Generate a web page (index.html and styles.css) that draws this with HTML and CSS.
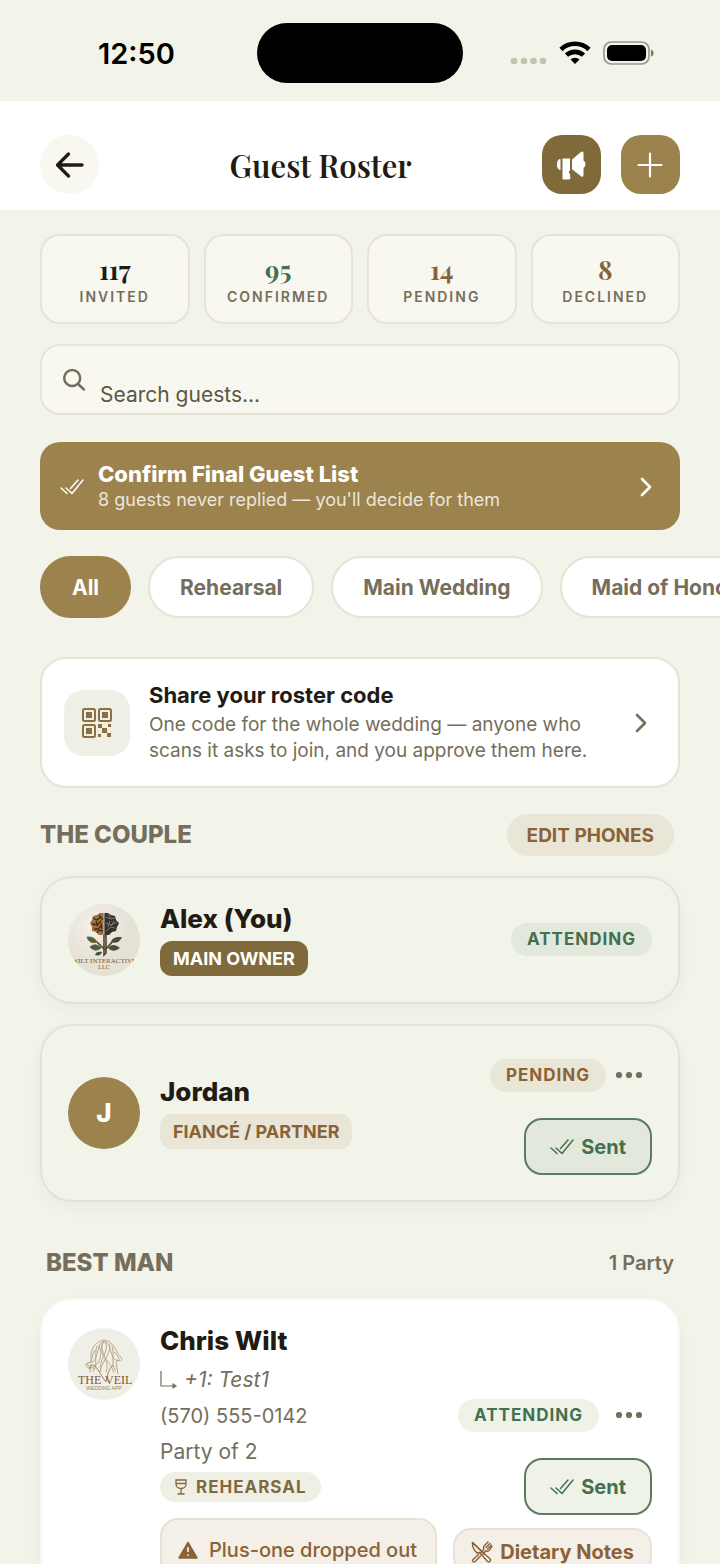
FILE: index.html
```html
<!DOCTYPE html>
<html lang="en">
<head>
    <meta charset="UTF-8">
    <meta name="viewport" content="width=device-width, initial-scale=1.0">
    <title>Guest Roster</title>
    <link rel="stylesheet" href="styles.css">
</head>
<body>
    <!-- Shared icons -->
    <svg class="sprite" aria-hidden="true">
        <symbol id="icon-checks" viewBox="0 0 24 16">
            <path d="M1 9l6 5.500M6 9l6 5.500L23 1M10.500 9.500L18 1" fill="none" stroke="currentColor" stroke-width="1.500" stroke-linecap="round" stroke-linejoin="round"/>
        </symbol>
        <symbol id="icon-chevron" viewBox="0 0 12 20">
            <path d="M2 2l8 8-8 8" fill="none" stroke="currentColor" stroke-width="2.600" stroke-linecap="round" stroke-linejoin="round"/>
        </symbol>
        <symbol id="icon-dots" viewBox="0 0 28 8">
            <g fill="currentColor"><circle cx="4" cy="4" r="3.100"/><circle cx="14" cy="4" r="3.100"/><circle cx="24" cy="4" r="3.100"/></g>
        </symbol>
    </svg>

    <div class="screen">
        <div class="status-bar">
            <div class="status-time">12:50</div>
            <div class="island"></div>
            <div class="status-icons">
                <svg width="37" height="8" viewBox="0 0 37 8">
                    <g fill="#c5c0b0"><circle cx="4" cy="4" r="3.300"/><circle cx="14" cy="4" r="3.300"/><circle cx="23.500" cy="4" r="3.300"/><circle cx="33" cy="4" r="3.300"/></g>
                </svg>
                <svg width="32" height="24" viewBox="0 0 32 24">
                    <g fill="none" stroke="#000" stroke-width="4.600">
                        <path d="M2 8.500a20 20 0 0 1 28 0"/>
                        <path d="M7.500 14.200a12.400 12.400 0 0 1 17 0"/>
                    </g>
                    <path d="M11.500 18.500a6.500 6.500 0 0 1 9 0L16 23z"/>
                </svg>
                <svg width="51" height="24" viewBox="0 0 51 24">
                    <rect x="1" y="1" width="45" height="22" rx="7.500" fill="none" stroke="#9b988a" stroke-width="1.700"/>
                    <rect x="4" y="4" width="39" height="16" rx="5"/>
                    <path d="M48 8.500c3.500 1 3.500 6 0 7z" fill="#7c796c"/>
                </svg>
            </div>
        </div>

        <header class="header">
            <button class="back-btn" aria-label="Back">
                <svg width="30" height="28" viewBox="0 0 30 28"><path d="M13.500 3L2.500 14l11 11M3 14h24" fill="none" stroke="currentColor" stroke-width="3.300" stroke-linecap="round" stroke-linejoin="round"/></svg>
            </button>
            <h1>Guest Roster</h1>
            <div class="header-actions">
                <button class="square-btn dark" aria-label="Announce">
                    <svg width="30" height="30" viewBox="0 0 30 30">
                        <g fill="#fff">
                            <path d="M4.500 9C-.3 9-.3 20 4.500 20z"/>
                            <path d="M6.500 8.500H14v12.200c-1.500.5-1.600 1.600-.5 2.500.7 1 .5 2 .7 3.200.5 1.600 0 3.100-1.600 3.100H8c-1 0-1.500-.5-1.500-1.500z"/>
                            <path d="M16 9.500l9-7.500c1.500-1 2.500-.5 2.500 1.200v7.300c2.600 1.500 2.600 6 0 7.500V25c0 1.700-1 2.200-2.500 1.200l-9-7z"/>
                        </g>
                    </svg>
                </button>
                <button class="square-btn" aria-label="Add guest">
                    <svg width="26" height="26" viewBox="0 0 26 26"><path d="M13 1.500v23M1.500 13h23" fill="none" stroke="#fff" stroke-width="2.200" stroke-linecap="round"/></svg>
                </button>
            </div>
        </header>

        <main class="content">
            <div class="stats">
                <div class="stat"><b>117</b><span>INVITED</span></div>
                <div class="stat confirmed"><b>95</b><span>CONFIRMED</span></div>
                <div class="stat pending"><b>14</b><span>PENDING</span></div>
                <div class="stat pending"><b>8</b><span>DECLINED</span></div>
            </div>

            <label class="search">
                <svg width="24" height="24" viewBox="0 0 24 24"><path d="M16.500 16.500l5.500 5M18.200 10a8 8 0 1 1-16 0a8 8 0 1 1 16 0z" fill="none" stroke="currentColor" stroke-width="2.500" stroke-linecap="round"/></svg>
                <input type="text" placeholder="Search guests..." aria-label="Search guests">
            </label>

            <button class="banner">
                <svg width="24" height="16"><use href="#icon-checks"/></svg>
                <span class="banner-text">
                    <strong>Confirm Final Guest List</strong>
                    <span>8 guests never replied — you'll decide for them</span>
                </span>
                <svg width="12" height="20"><use href="#icon-chevron"/></svg>
            </button>

            <div class="chips">
                <button class="chip active">All</button>
                <button class="chip">Rehearsal</button>
                <button class="chip">Main Wedding</button>
                <button class="chip">Maid of Honor</button>
            </div>

            <button class="share">
                <span class="share-icon">
                    <svg width="30" height="30" viewBox="0 0 30 30">
                        <g fill="none" stroke="#8c7040" stroke-width="2">
                            <rect x="1" y="1" width="12" height="12" rx="1.500"/>
                            <rect x="17" y="1" width="12" height="12" rx="1.500"/>
                            <rect x="1" y="17" width="12" height="12" rx="1.500"/>
                        </g>
                        <g fill="#8c7040">
                            <path d="M4 4h6v6H4zM20 4h6v6h-6zM4 20h6v6H4z"/>
                            <path d="M16 16h4v4h-4zM26 16h3v3h-3zM20 20h5v5h-5zM16 26h3v3h-3zM25 25h4v4h-4z"/>
                        </g>
                    </svg>
                </span>
                <span class="share-text">
                    <strong>Share your roster code</strong>
                    <span>One code for the whole wedding — anyone who scans it asks to join, and you approve them here.</span>
                </span>
                <svg width="12" height="20"><use href="#icon-chevron"/></svg>
            </button>

            <!-- The couple -->
            <div class="section-head">
                <h2>THE COUPLE</h2>
                <button class="edit-btn">EDIT PHONES</button>
            </div>

            <article class="card">
                <svg class="avatar" viewBox="0 0 72 72" role="img" aria-label="Wilt Interactive LLC">
                    <defs>
                        <radialGradient id="pearl" cx="35%" cy="30%"><stop offset="0" stop-color="#f4f0e9"/><stop offset="1" stop-color="#e5e1d5"/></radialGradient>
                        <clipPath id="round"><circle cx="36" cy="36" r="36"/></clipPath>
                    </defs>
                    <g clip-path="url(#round)">
                        <rect width="72" height="72" fill="url(#pearl)"/>
                        <path d="M36 9l-4 0-3 2-4 1-1 4-2 3 2 4 0 4 4 1 3 3 5 0z" fill="#a0713a"/>
                        <path d="M36 9l4 0 3 2 4 1 1 4 3 3-2 4-1 4-4 1-3 3-5 0z" fill="#35312d"/>
                        <path d="M25 14l4 2 4-3 2 3M24 20l5 1 4-4M26 25l4 0 4-4M29 29l2-3 4 1M31 11l2 3M28 17l2 5M33 19l1 6" fill="none" stroke="#3f2c18" stroke-width="1.300"/>
                        <path d="M38 13l5 2 4-1M38 19l5 2 6-3M38 27l5-4 4 1M40 10l3 4M42 17l-2 6M46 17l-3 5" fill="none" stroke="#89837a" stroke-width=".9"/>
                        <path d="M36 8v23" stroke="#e8e0cf" stroke-width=".8"/>
                        <path d="M36 31v20l2-2V31M36 45l-7-7M37 46l8-9" fill="none" stroke="#4d402f" stroke-width="1.600"/>
                        <path d="M29 38c-2-4-5-5-10-5 1 4 5 7 10 5zM33 44c-4-4-7-4-11-1 4 4 7 4 11 1z" fill="#39664f" stroke="#8b602f"/>
                        <path d="M43 38c2-5 5-5 11-5-2 5-6 7-11 5zM40 44c3-4 7-4 12 0-4 3-8 4-12 0zM34 48c-4-1-6 0-7 3 4 1 6 0 7-3z" fill="#4d4a43"/>
                        <text x="36" y="59" text-anchor="middle" class="logo-text" font-size="7">WILT INTERACTIVE</text>
                        <text x="36" y="65" text-anchor="middle" class="logo-text" font-size="6">LLC</text>
                    </g>
                </svg>
                <div class="info">
                    <h3>Alex (You)</h3>
                    <span class="role owner">MAIN OWNER</span>
                </div>
                <div class="actions">
                    <span class="pill attending">ATTENDING</span>
                </div>
            </article>

            <article class="card">
                <div class="avatar initial">J</div>
                <div class="info">
                    <h3>Jordan</h3>
                    <span class="role">FIANCÉ / PARTNER</span>
                </div>
                <div class="actions">
                    <div class="status-row">
                        <span class="pill">PENDING</span>
                        <button class="more-btn" aria-label="More options"><svg width="28" height="8"><use href="#icon-dots"/></svg></button>
                    </div>
                    <button class="sent-btn"><svg width="24" height="16"><use href="#icon-checks"/></svg>Sent</button>
                </div>
            </article>

            <!-- Best man -->
            <div class="section-head party-head">
                <h2>BEST MAN</h2>
                <span class="count">1 Party</span>
            </div>

            <article class="card party">
                <svg class="avatar" viewBox="0 0 72 72" role="img" aria-label="The Veil Wedding App">
                    <circle cx="36" cy="36" r="36" fill="#f0efe7"/>
                    <g fill="none" stroke="#b9a98c" stroke-width="1">
                        <path d="M24 34c-3-7 0-20 12-22 12 2 12 15 17 17 3 4-3 5-7 2-4-5-3-16-10-18-7 2-5 13-10 20-4 3-9 1-8 4 0 4 8 4 12-2 5-7 1-17 6-21"/>
                        <path d="M27 22c-4 5-2 12-7 13M29 18c-3 9 1 20-4 26M44 18c3 9-2 17 4 25M42 16c0 13-8 16-10 28M31 17c2 13 12 16 15 28M35 14c-5 8 8 21 3 30M37 14c6 8-8 19-4 30M46 24c5 4 7 10 2 9M18 36l8 5M48 34l2 12M23 36l-1 8"/>
                    </g>
                    <path d="M21 41c5-11 9 3 17 13 1-7 3-13 7-17" fill="none" stroke="#a0804b"/>
                    <text x="10" y="56" class="logo-text" font-size="12">THE</text>
                    <text x="37" y="56" class="logo-text" font-size="12">VEIL</text>
                    <text x="36" y="62" text-anchor="middle" class="logo-small" font-size="5">WEDDING APP</text>
                </svg>
                <div class="info">
                    <h3>Chris Wilt</h3>
                    <p class="plus-one">
                        <svg width="18" height="20" viewBox="0 0 18 20"><path d="M1 1v15h14M13 14l3 2-3 2z" fill="none" stroke="currentColor" stroke-width="1.200"/></svg>
                        <em>+1: Test1</em>
                    </p>
                    <p class="phone">(570) 555-0142</p>
                    <p class="party-size">Party of 2</p>
                    <span class="event">
                        <svg width="14" height="16" viewBox="0 0 14 16"><path d="M2 1h10v4a5 4.500 0 0 1-10 0zM2 4.500h10M7 9.500V15M3.500 15h7" fill="none" stroke="currentColor" stroke-width="1.300"/></svg>
                        REHEARSAL
                    </span>
                    <div class="warning">
                        <svg width="20" height="18" viewBox="0 0 20 18"><path d="M10 1.500L19 17H1z" fill="currentColor" stroke="currentColor" stroke-width="1.500" stroke-linejoin="round"/><path d="M10 6v5M10 13.500v1.600" stroke="#f4efe7" stroke-width="1.700"/></svg>
                        Plus-one dropped out
                    </div>
                </div>
                <div class="actions">
                    <div class="status-row">
                        <span class="pill attending">ATTENDING</span>
                        <button class="more-btn" aria-label="More options"><svg width="28" height="8"><use href="#icon-dots"/></svg></button>
                    </div>
                    <button class="sent-btn"><svg width="24" height="16"><use href="#icon-checks"/></svg>Sent</button>
                    <button class="diet-btn">
                        <svg width="22" height="22" viewBox="0 0 22 22">
                            <g fill="none" stroke="currentColor" stroke-width="1.400" stroke-linecap="round" stroke-linejoin="round">
                                <path d="M1.500 1.500C1 6 3 9 6 12l2.500-.5 8 9c2 1.300 4-1 2.500-2.700L13.500 13z"/>
                                <path d="M1.500 1.500L12 11.500M17 1l-4 4c-1 1.500-.5 2.500 0 3.500L9.500 12M7.500 13.500L2 18.500c-1.300 1.500.5 3.500 2.200 2L9.500 15M12 13.500L14.500 10c1.500.5 2.500.5 3.500-.5L21 5.500M19 2.500L15 6.500M20.300 4L16.500 8"/>
                            </g>
                        </svg>
                        Dietary Notes
                    </button>
                </div>
            </article>
        </main>
    </div>
</body>
</html>
```
FILE: styles.css
```css
* {
    box-sizing: border-box;
}

body {
    font-family: Inter, "Liberation Sans", sans-serif;
    background-color: #f2f3e9;
    color: #211b14;
    margin: 0;
}

h1,
h2,
h3,
p {
    margin: 0;
}

button {
    font-family: inherit;
    color: inherit;
    border: none;
    padding: 0;
    cursor: pointer;
    white-space: nowrap;
}

svg {
    flex-shrink: 0;
}

.sprite {
    display: none;
}

.screen {
    height: 100vh;
    display: flex;
    flex-direction: column;
    overflow: hidden;
}

/* Status bar */
.status-bar {
    flex-shrink: 0;
    height: 101px;
    padding: 5px 66px 0;
    display: grid;
    grid-template-columns: 1fr 206px 1fr;
    align-items: center;
    color: #000;
}

.status-time {
    padding-left: 32px;
    font-size: 29px;
    font-weight: 600;
}

.island {
    height: 60px;
    border-radius: 30px;
    background-color: #000;
}

.status-icons {
    display: flex;
    justify-content: flex-end;
    align-items: center;
    gap: 12px;
}

.status-icons svg:first-child {
    margin-top: 16px;
}

/* Header */
.header {
    flex-shrink: 0;
    background-color: #fff;
    padding: 34px 40px 16px;
    display: flex;
    justify-content: space-between;
    align-items: center;
}

.header h1 {
    font-family: "Playfair Display", "Liberation Serif", serif;
    font-size: 31px;
    line-height: 40px;
    font-weight: 600;
}

.header-actions {
    display: flex;
    gap: 20px;
}

.back-btn,
.square-btn {
    width: 59px;
    height: 59px;
    display: flex;
    align-items: center;
    justify-content: center;
}

.back-btn {
    border-radius: 50%;
    background-color: #f8f8f0;
}

.square-btn {
    border-radius: 20px;
    background-color: #9c824c;
}

.square-btn.dark {
    background-color: #80693b;
}

.content {
    flex: 1;
    min-height: 0;
    overflow: hidden auto;
    scrollbar-width: none;
    padding: 24px 40px;
}

/* Counters */
.stats {
    display: grid;
    grid-template-columns: repeat(4, 1fr);
    gap: 14px;
    margin-bottom: 20px;
}

.stat {
    height: 90px;
    padding-top: 6px;
    border: 2px solid #e7e3d5;
    border-radius: 20px;
    background-color: #f8f8f0;
    display: flex;
    flex-direction: column;
    align-items: center;
    justify-content: center;
}

.stat b {
    font-family: "Playfair Display", "Liberation Serif", serif;
    font-size: 26px;
    line-height: 30px;
}

.stat span {
    font-size: 14px;
    line-height: 24px;
    font-weight: 600;
    letter-spacing: 2px;
    color: #756e5c;
}

.stat.confirmed b {
    color: #43704f;
}

.stat.pending b {
    color: #8b6235;
}

/* Search */
.search {
    height: 71px;
    padding: 0 20px;
    border: 2px solid #e7e3d5;
    border-radius: 20px;
    background-color: #f8f8f0;
    display: flex;
    align-items: center;
    gap: 14px;
    color: #756e5c;
}

.search input {
    flex: 1;
    border: none;
    outline: none;
    background: none;
    padding: 30px 0 0;
    font-family: inherit;
    font-size: 21px;
    color: #211b14;
}

.search input::placeholder {
    color: #5c5647;
}

/* Final list banner */
.banner {
    width: 100%;
    height: 88px;
    margin: 27px 0 26px;
    padding: 2px 28px 0 20px;
    border-radius: 20px;
    background-color: #9c824c;
    color: #fff;
    display: flex;
    align-items: center;
    gap: 14px;
    text-align: left;
}

.banner-text {
    flex: 1;
    display: flex;
    flex-direction: column;
}

.banner-text strong {
    font-size: 22px;
    line-height: 26px;
    font-weight: 800;
}

.banner-text span {
    font-size: 18px;
    line-height: 26px;
    color: #ebe6db;
}

/* Filters */
.chips {
    display: flex;
    gap: 17px;
    margin-right: -40px;
    overflow: hidden;
}

.chip {
    flex-shrink: 0;
    height: 62px;
    padding: 0 30px;
    border: 2px solid #e7e3d5;
    border-radius: 31px;
    background-color: #fff;
    color: #756e5c;
    font-size: 21px;
    font-weight: 700;
}

.chip.active {
    border-color: #9c824c;
    background-color: #9c824c;
    color: #fff;
}

/* Roster code */
.share {
    width: 100%;
    height: 131px;
    margin: 39px 0 26px;
    padding: 0 31px 0 22px;
    border: 2px solid #e7e3d5;
    border-radius: 26px;
    background-color: #fff;
    display: flex;
    align-items: center;
    gap: 19px;
    text-align: left;
    color: #756e5c;
    white-space: normal;
}

.share-icon {
    flex-shrink: 0;
    width: 66px;
    height: 66px;
    border-radius: 20px;
    background-color: #f0efe6;
    display: flex;
    align-items: center;
    justify-content: center;
}

.share-text {
    flex: 1;
    display: flex;
    flex-direction: column;
    gap: 4px;
}

.share-text strong {
    font-size: 22px;
    line-height: 26px;
    font-weight: 700;
    color: #211b14;
}

.share-text span {
    font-size: 19px;
    line-height: 26px;
}

/* Section titles */
.section-head {
    display: flex;
    justify-content: space-between;
    align-items: center;
    padding-right: 6px;
    margin-bottom: 20px;
    color: #756e5c;
}

.section-head h2 {
    font-size: 24px;
    line-height: 30px;
    font-weight: 800;
}

.edit-btn {
    height: 42px;
    padding: 0 20px;
    border-radius: 21px;
    background-color: #e9e5d7;
    color: #8b6235;
    font-size: 19px;
    font-weight: 700;
}

.party-head {
    padding-left: 6px;
    margin: 46px 0 20px;
}

.count {
    font-size: 20px;
    font-weight: 600;
}

/* Guest cards */
.card {
    min-height: 128px;
    padding: 24px 26px 25px;
    margin-bottom: 20px;
    border: 2px solid #e7e1d3;
    border-radius: 32px;
    background-color: #f2f3e9;
    box-shadow: 0 6px 18px rgba(90, 80, 60, 0.04);
    display: flex;
    align-items: center;
}

.avatar {
    flex-shrink: 0;
    width: 72px;
    height: 72px;
    margin-right: 20px;
}

.avatar.initial {
    border-radius: 50%;
    background-color: #9c824c;
    color: #fff;
    font-size: 26px;
    font-weight: 800;
    display: flex;
    align-items: center;
    justify-content: center;
}

.logo-text {
    font-family: "Liberation Serif", serif;
    font-weight: 400;
    fill: #7d5c33;
}

.logo-small {
    font-family: "Liberation Sans", sans-serif;
    fill: #96825a;
}

.info {
    flex: 1;
    display: flex;
    flex-direction: column;
    align-items: flex-start;
}

.info h3 {
    font-size: 26px;
    line-height: 32px;
    font-weight: 800;
    margin-bottom: 6px;
}

.role {
    height: 35px;
    padding: 0 13px;
    border-radius: 12px;
    background-color: #e9e5d7;
    color: #8b6235;
    font-size: 18px;
    line-height: 35px;
    font-weight: 700;
}

.role.owner {
    background-color: #80693b;
    color: #fff;
}

.actions {
    display: flex;
    flex-direction: column;
    align-items: flex-end;
}

.status-row {
    display: flex;
    align-items: center;
    margin-bottom: 18px;
}

.pill {
    height: 33px;
    padding: 0 16px;
    border-radius: 17px;
    background-color: #e9e5d7;
    color: #8b6235;
    font-size: 17px;
    line-height: 33px;
    font-weight: 700;
    letter-spacing: 1px;
}

.pill.attending {
    background-color: #e2e8dc;
    color: #43704f;
}

.more-btn {
    width: 46px;
    height: 50px;
    background: none;
    color: #756e5c;
    display: flex;
    align-items: center;
    justify-content: center;
}

.sent-btn {
    height: 57px;
    padding: 0 24px;
    border: 2px solid #5b7c60;
    border-radius: 18px;
    background-color: #e2e8dc;
    color: #43704f;
    display: flex;
    align-items: center;
    gap: 7px;
    font-size: 20px;
    font-weight: 700;
}

/* Party card */
.card.party {
    align-items: flex-start;
    padding-top: 28px;
    border-color: #f8f7f1;
    background-color: #fff;
}

.party h3 {
    line-height: 26px;
    margin-bottom: 12px;
}

.party p {
    font-size: 21px;
    line-height: 28px;
    color: #756e5c;
}

.party .plus-one {
    display: flex;
    align-items: center;
    gap: 6px;
    margin-bottom: 8px;
}

.party .phone {
    font-size: 20px;
    margin-bottom: 8px;
}

.party .party-size {
    margin-bottom: 6px;
}

.event {
    height: 30px;
    padding: 0 14px;
    border-radius: 15px;
    background-color: #f0efe6;
    color: #80693b;
    display: flex;
    align-items: center;
    gap: 8px;
    font-size: 17px;
    font-weight: 700;
    letter-spacing: 1px;
}

.warning {
    align-self: stretch;
    height: 64px;
    margin-top: 16px;
    padding: 0 16px;
    border: 2px solid #e8e2d6;
    border-radius: 18px;
    background-color: #f4efe7;
    color: #8b6235;
    display: flex;
    align-items: center;
    gap: 11px;
    font-size: 20px;
    font-weight: 500;
    white-space: nowrap;
}

.party .actions {
    margin-left: 16px;
    padding-top: 62px;
}

.party .status-row {
    gap: 7px;
}

.party .pill,
.party .sent-btn {
    background-color: #eff2e9;
}

.diet-btn {
    height: 48px;
    margin-top: 13px;
    padding: 0 16px;
    border: 2px solid #e8e2d6;
    border-radius: 18px;
    background-color: #f4efe7;
    color: #8b6235;
    display: flex;
    align-items: center;
    gap: 7px;
    font-size: 20px;
    font-weight: 700;
}
```
